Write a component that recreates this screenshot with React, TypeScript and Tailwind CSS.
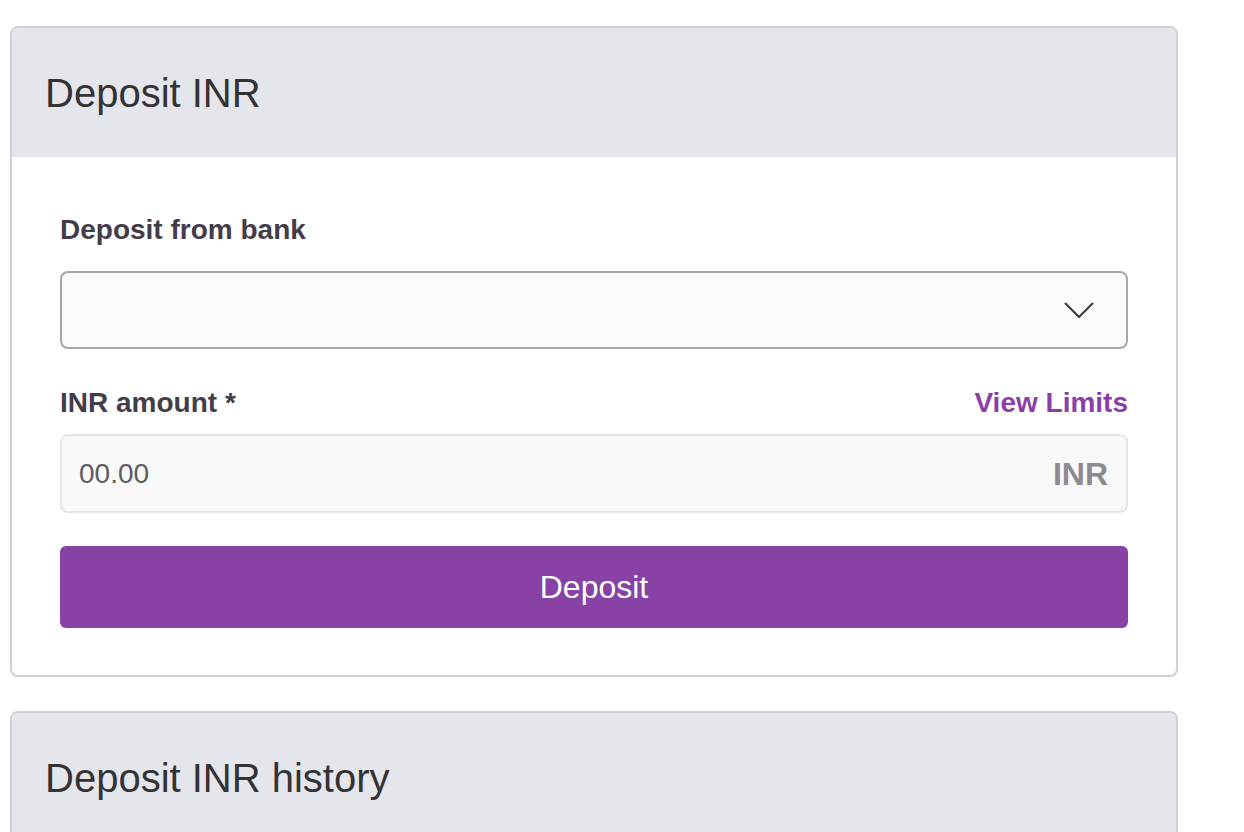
import { useState } from "react";

const font = { fontFamily: '"Liberation Sans", Arial, sans-serif' };

const Panel = ({ title, children }: { title: string; children?: React.ReactNode }) => (
  <div className="w-[1168px] rounded-[8px] border-2 border-[#d1d0d6] bg-white overflow-hidden">
    <div className="h-[129px] bg-[#e5e6eb] flex items-center px-[33px]">
      <h2 className="text-[40px] leading-[48px] text-[#333235]">{title}</h2>
    </div>
    {children}
  </div>
);

const Chevron = () => (
  <svg width="30" height="17" viewBox="0 0 30 17" fill="none" className="text-[#3c3742]">
    <path d="M1.5 1.5 L15 15 L28.5 1.5" stroke="currentColor" strokeWidth="2" strokeLinecap="round" strokeLinejoin="round" />
  </svg>
);

export default function App() {
  const [amount, setAmount] = useState("");

  return (
    <div className="min-h-screen bg-white pt-[26px] pl-[10px] flex flex-col gap-[34px]" style={font}>
      <Panel title="Deposit INR">
        <div className="px-[48px] pt-[57px] pb-[47px]">
          <label className="block text-[28px] leading-[32px] font-bold text-[#433c4a] mb-[25px]">
            Deposit from bank
          </label>
          <button className="w-full h-[78px] rounded-[8px] border-2 border-[#a8a6ad] bg-[#fafafa] flex items-center justify-end pr-[32px]">
            <Chevron />
          </button>

          <div className="mt-[38px] mb-[15px] flex items-center justify-between">
            <span className="text-[28px] leading-[32px] font-bold text-[#433c4a]">INR amount *</span>
            <a className="text-[28px] leading-[32px] font-bold text-[#8a3fa8] cursor-pointer">View Limits</a>
          </div>
          <div className="h-[79px] rounded-[8px] border-2 border-[#e6e5ea] bg-[#f9f9fa] flex items-center pl-[17px] pr-[18px]">
            <input
              value={amount}
              onChange={(e) => setAmount(e.target.value)}
              placeholder="00.00"
              className="flex-1 bg-transparent outline-none text-[28px] text-[#5f5b63] placeholder:text-[#5f5b63]"
              style={font}
            />
            <span className="text-[32px] font-bold text-[#8e8a92]">INR</span>
          </div>

          <button className="mt-[33px] w-full h-[82px] rounded-[6px] bg-[#8842a5] text-white text-[32px]" style={font}>
            Deposit
          </button>
        </div>
      </Panel>

      <Panel title="Deposit INR history" />
    </div>
  );
}
